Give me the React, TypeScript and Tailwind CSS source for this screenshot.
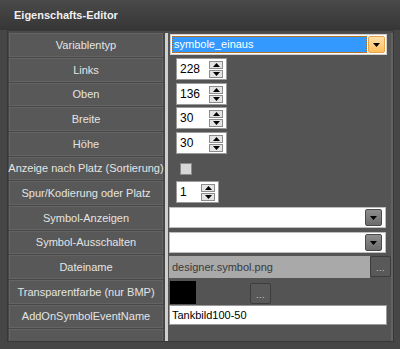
import React from "react";

const rows: { label: string; h: 24 | 25 }[] = [
  { label: "Variablentyp", h: 25 },
  { label: "Links", h: 25 },
  { label: "Oben", h: 24 },
  { label: "Breite", h: 25 },
  { label: "Höhe", h: 25 },
  { label: "Anzeige nach Platz (Sortierung)", h: 24 },
  { label: "Spur/Kodierung oder Platz", h: 25 },
  { label: "Symbol-Anzeigen", h: 25 },
  { label: "Symbol-Ausschalten", h: 24 },
  { label: "Dateiname", h: 25 },
  { label: "Transparentfarbe (nur BMP)", h: 25 },
  { label: "AddOnSymbolEventName", h: 24 },
];

function TriDown() {
  return (
    <svg width="7" height="4" viewBox="0 0 7 4">
      <polygon points="0,0 7,0 3.5,4" fill="#000" />
    </svg>
  );
}
function TriUp() {
  return (
    <svg width="7" height="4" viewBox="0 0 7 4">
      <polygon points="0,4 7,4 3.5,0" fill="#000" />
    </svg>
  );
}

function Spinner({ value, w }: { value: string; w: "wide" | "narrow" }) {
  return (
    <div
      className={
        (w === "wide" ? "w-[51px] ml-[8px]" : "w-[43px] ml-[8px]") +
        " h-[22px] bg-white border border-[#9a9a9a] flex items-center justify-between pl-[3px] pr-[3px]"
      }
    >
      <span className="text-[12px] text-black leading-none">{value}</span>
      <div className="flex flex-col gap-[1px]">
        <div className="w-[14px] h-[8px] bg-[#e4e4e4] border border-[#8c8c8c] flex items-center justify-center">
          <TriUp />
        </div>
        <div className="w-[14px] h-[8px] bg-[#e4e4e4] border border-[#8c8c8c] flex items-center justify-center">
          <TriDown />
        </div>
      </div>
    </div>
  );
}

function GrayCombo() {
  return (
    <div className="mt-[1px] ml-[1px] w-[217px] h-[21px] bg-white border border-[#bdbdbd] flex items-center justify-end pr-[3px]">
      <div className="w-[17px] h-[17px] rounded-[2px] bg-gradient-to-b from-[#8e8e8e] to-[#6c6c6c] border border-[#4a4a4a] flex items-center justify-center">
        <TriDown />
      </div>
    </div>
  );
}

function DotsButton() {
  return (
    <div className="w-[21px] h-[21px] rounded-[2px] bg-[#595959] border border-[#3c3c3c] flex items-end justify-center pb-[3px]">
      <span className="text-[9px] leading-none text-[#d0d0d0] tracking-[0.5px]">...</span>
    </div>
  );
}

function Value({ i }: { i: number }) {
  switch (i) {
    case 0:
      return (
        <div className="mt-[1px] ml-[2px] w-[217px] h-[21px] bg-white border border-[#cfcfcf] flex items-center p-[1px]">
          <div className="flex-1 h-full bg-[#3399ff] outline-1 outline-dotted outline-[#b06a1e] -outline-offset-1 flex items-center pl-[2px]">
            <span className="text-[11px] text-white leading-none">symbole_einaus</span>
          </div>
          <div className="ml-[1px] w-[17px] h-full rounded-[2px] bg-gradient-to-b from-[#ffe0a8] to-[#ffbf5e] border border-[#e8a448] flex items-center justify-center">
            <TriDown />
          </div>
        </div>
      );
    case 1:
      return <Spinner value="228" w="wide" />;
    case 2:
      return <Spinner value="136" w="wide" />;
    case 3:
      return <Spinner value="30" w="wide" />;
    case 4:
      return <Spinner value="30" w="wide" />;
    case 5:
      return (
        <div className="h-full flex items-center">
          <div className="ml-[12px] w-[12px] h-[12px] bg-[#d8d8d8] border border-[#8a8a8a]" />
        </div>
      );
    case 6:
      return <Spinner value="1" w="narrow" />;
    case 7:
    case 8:
      return <GrayCombo />;
    case 9:
      return (
        <div className="mt-[1px] flex">
          <div className="ml-[1px] w-[201px] h-[22px] bg-[#a9a9a9] flex items-center pl-[3px]">
            <span className="text-[11px] text-[#3a3a3a] leading-none">designer.symbol.png</span>
          </div>
          <DotsButton />
        </div>
      );
    case 10:
      return (
        <div className="flex items-start">
          <div className="mt-[1px] ml-[2px] w-[26px] h-[23px] bg-black" />
          <div className="ml-[54px] mt-[3px]">
            <DotsButton />
          </div>
        </div>
      );
    case 11:
      return (
        <div className="ml-[1px] w-[218px] h-[20px] bg-white border border-[#9a9a9a] flex items-center pl-[2px]">
          <span className="text-[11px] text-black leading-none">Tankbild100-50</span>
        </div>
      );
  }
  return null;
}

export default function App() {
  return (
    <div className="w-[400px] h-[349px] bg-[#464646] flex flex-col font-['Liberation_Sans',Arial,sans-serif] overflow-hidden">
      <div className="h-[30px] bg-gradient-to-b from-[#4a4a4a] to-[#363636] flex items-center pl-[14px] shrink-0">
        <span className="text-[11px] font-bold text-[#f0f0f0]">Eigenschafts-Editor</span>
      </div>
      <div className="ml-[7px] w-[387px] h-[312px] border border-[#383838] flex flex-col pt-[2px] bg-[#4b4b4b]">
        {rows.map((r, i) => (
          <div key={i} className={(r.h === 25 ? "h-[25px]" : "h-[24px]") + " flex shrink-0"}>
            <div className="w-[157px] pl-[1px] pr-[2px] pb-[1px] bg-[#474747]">
              <div className="h-full bg-[#585858] border border-[#646464] flex items-center justify-center">
                <span className="text-[11px] text-[#e4e4e4] leading-none whitespace-nowrap">{r.label}</span>
              </div>
            </div>
            <div className="w-[3px] bg-[#cfcfcf]" />
            <div className="flex-1 bg-[#545454] border-r-2 border-[#626262]">
              <Value i={i} />
            </div>
          </div>
        ))}
        <div className="flex-1 flex">
          <div className="w-[157px] pl-[1px] pr-[2px] bg-[#474747]">
            <div className="h-full bg-[#585858] border border-b-0 border-[#646464]" />
          </div>
          <div className="w-[3px] bg-[#cfcfcf]" />
          <div className="flex-1 bg-[#545454] border-r-2 border-[#626262]" />
        </div>
      </div>
    </div>
  );
}
